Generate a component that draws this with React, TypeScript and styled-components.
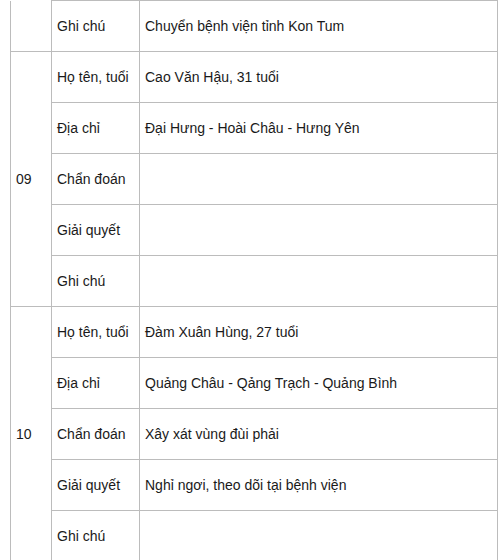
import React from 'react';
import styled, { createGlobalStyle } from 'styled-components';

type Entry = {
  no: string;
  rows: [string, string][];
};

const entries: Entry[] = [
  {
    no: '09',
    rows: [
      ['Họ tên, tuổi', 'Cao Văn Hậu, 31 tuổi'],
      ['Địa chỉ', 'Đại Hưng - Hoài Châu - Hưng Yên'],
      ['Chẩn đoán', ''],
      ['Giải quyết', ''],
      ['Ghi chú', ''],
    ],
  },
  {
    no: '10',
    rows: [
      ['Họ tên, tuổi', 'Đàm Xuân Hùng, 27 tuổi'],
      ['Địa chỉ', 'Quảng Châu - Qảng Trạch - Quảng Bình'],
      ['Chẩn đoán', 'Xây xát vùng đùi phải'],
      ['Giải quyết', 'Nghỉ ngơi, theo dõi tại bệnh viện'],
      ['Ghi chú', ''],
    ],
  },
];

const App = () => {
  return (
    <>
      <GlobalStyle />
      <Table>
        <colgroup>
          <col style={{ width: 41 }} />
          <col style={{ width: 88 }} />
          <col />
        </colgroup>
        <tbody>
          {/* tail of the previous entry, its number cell is cut off above */}
          <tr>
            <NoCell $open />
            <Cell>Ghi chú</Cell>
            <Cell>Chuyển bệnh viện tỉnh Kon Tum</Cell>
          </tr>
          {entries.map((entry) =>
            entry.rows.map(([label, value], i) => (
              <tr key={entry.no + label}>
                {i === 0 && <NoCell rowSpan={entry.rows.length}>{entry.no}</NoCell>}
                <Cell>{label}</Cell>
                <Cell>{value}</Cell>
              </tr>
            ))
          )}
        </tbody>
      </Table>
    </>
  );
};

const GlobalStyle = createGlobalStyle`
  html, body {
    margin: 0;
    padding: 0;
    background: #fff;
    overflow: hidden;
  }
  body {
    font-family: "Liberation Sans", Arial, sans-serif;
    font-size: 14px;
    color: #1a1a1a;
  }
`;

const Table = styled.table`
  border-collapse: collapse;
  table-layout: fixed;
  width: 488px;
  margin-left: 10px;
`;

const Cell = styled.td`
  border: 1px solid #bcbcbc;
  height: 51px;
  padding: 0 5px;
  vertical-align: middle;
  line-height: 17px;
  box-sizing: border-box;
  white-space: nowrap;
`;

const NoCell = styled(Cell)<{ $open?: boolean }>`
  ${({ $open }) => ($open ? 'border-top: none;' : '')}
`;

export default App;
